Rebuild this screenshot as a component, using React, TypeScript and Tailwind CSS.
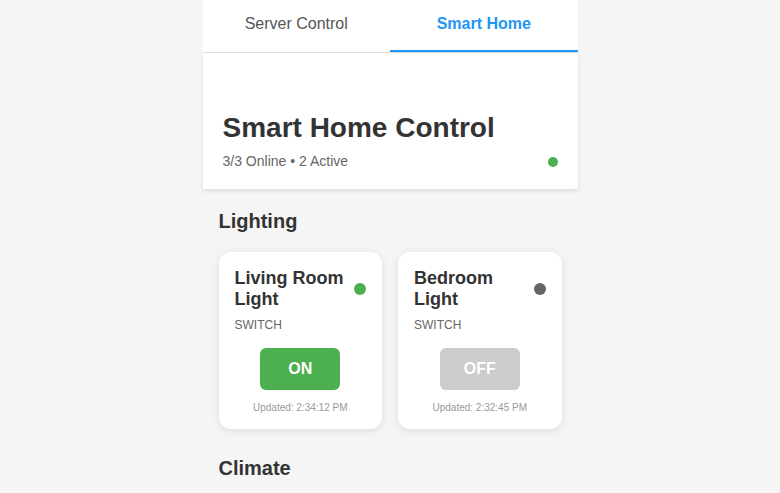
import React, { useState } from 'react';

interface Device {
  id: string;
  name: string;
  type: string;
  on: boolean;
  updated: string;
}

const LIGHTS: Device[] = [
  { id: 'lr', name: 'Living Room Light', type: 'switch', on: true, updated: '2:34:12 PM' },
  { id: 'br', name: 'Bedroom Light', type: 'switch', on: false, updated: '2:32:45 PM' },
];

const DeviceCard: React.FC<{ device: Device; onToggle: () => void }> = ({ device, onToggle }) => (
  <div className="bg-white rounded-xl shadow-[0_2px_8px_rgba(0,0,0,0.1)] px-4 pt-4 pb-[15px]">
    <div className="flex items-center justify-between gap-2">
      <h3 className="text-[18px] font-bold leading-[21px] text-[#333]">{device.name}</h3>
      <span className={`w-3 h-3 rounded-full shrink-0 ${device.on ? 'bg-[#4caf50]' : 'bg-[#666]'}`} />
    </div>
    <p className="mt-2 text-[12px] leading-[14px] uppercase text-[#666]">{device.type}</p>
    <div className="flex justify-center mt-4">
      <button
        onClick={onToggle}
        className={`w-20 h-[42px] rounded-md text-[16px] font-bold text-white ${device.on ? 'bg-[#4caf50]' : 'bg-[#ccc]'}`}
      >
        {device.on ? 'ON' : 'OFF'}
      </button>
    </div>
    <p className="mt-3 text-center text-[10px] leading-[12px] text-[#999]">Updated: {device.updated}</p>
  </div>
);

export default function App() {
  const [tab, setTab] = useState<'server' | 'home'>('home');
  const [lights, setLights] = useState(LIGHTS);

  const toggle = (id: string) =>
    setLights(prev => prev.map(l => (l.id === id ? { ...l, on: !l.on } : l)));

  return (
    <div className="min-h-screen bg-[#f5f5f5] font-['Liberation_Sans',Arial,sans-serif]">
      <div className="max-w-[375px] mx-auto">
        {/* Tabs */}
        <div className="flex bg-white border-b border-[#e0e0e0]">
          {[
            { key: 'server', label: 'Server Control' },
            { key: 'home', label: 'Smart Home' },
          ].map(t => (
            <button
              key={t.key}
              onClick={() => setTab(t.key as 'server' | 'home')}
              className={`flex-1 h-[52px] pb-[2px] text-[16px] border-b-2 ${
                tab === t.key ? 'border-[#2196f3] text-[#2196f3] font-bold' : 'border-transparent text-[#555]'
              }`}
            >
              {t.label}
            </button>
          ))}
        </div>

        {/* Header */}
        <div className="bg-white shadow-[0_2px_4px_rgba(0,0,0,0.1)] px-5 pt-[58px] pb-[19px]">
          <h1 className="text-[28px] font-bold leading-[34px] text-[#333]">Smart Home Control</h1>
          <div className="flex items-center justify-between mt-2">
            <span className="text-[14px] leading-[17px] text-[#666]">3/3 Online • 2 Active</span>
            <span className="w-2.5 h-2.5 rounded-full bg-[#4caf50]" />
          </div>
        </div>

        {/* Lighting */}
        <section className="px-4 pt-5">
          <h2 className="text-[20px] font-bold leading-[24px] text-[#333] mb-[19px]">Lighting</h2>
          <div className="grid grid-cols-2 gap-4">
            {lights.map(l => (
              <DeviceCard key={l.id} device={l} onToggle={() => toggle(l.id)} />
            ))}
          </div>
        </section>

        {/* Climate */}
        <section className="px-4 pt-[27px]">
          <h2 className="text-[20px] font-bold leading-[24px] text-[#333] mb-5">Climate</h2>
          <div className="h-40" />
        </section>
      </div>
    </div>
  );
}
